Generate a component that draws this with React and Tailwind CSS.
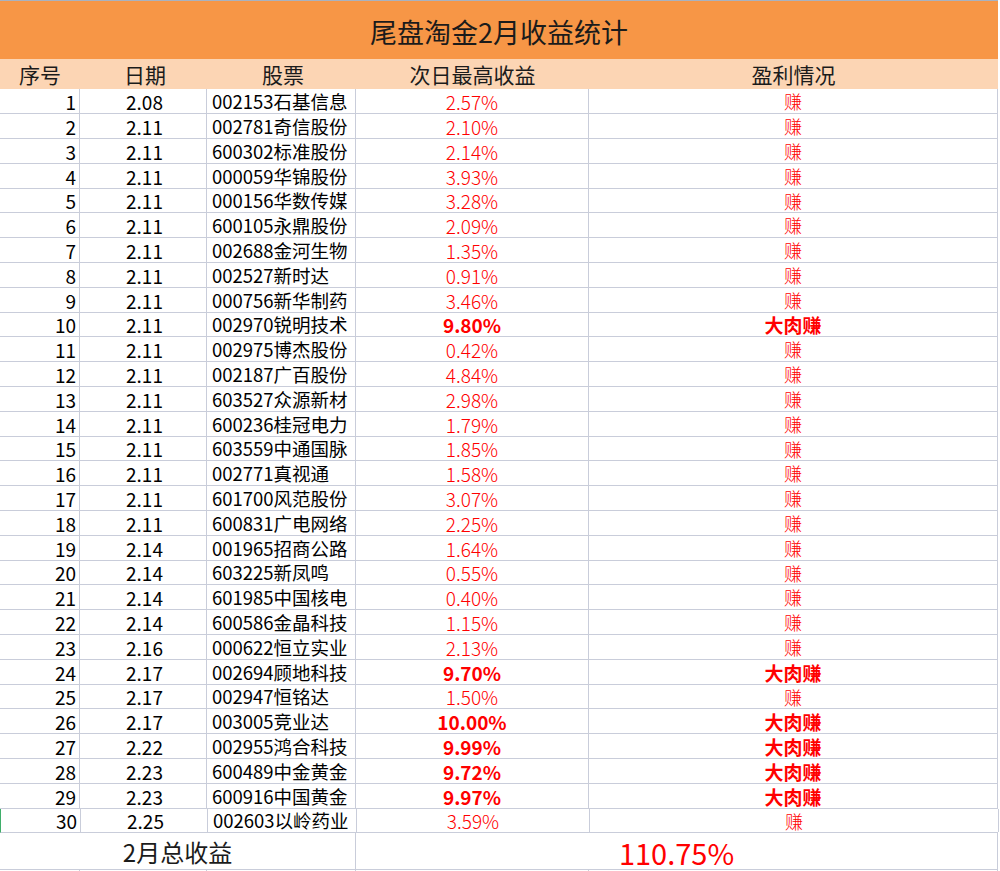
import React from "react";

const rows = [
  ["1", "2.08", "002153石基信息", "2.57%", false],
  ["2", "2.11", "002781奇信股份", "2.10%", false],
  ["3", "2.11", "600302标准股份", "2.14%", false],
  ["4", "2.11", "000059华锦股份", "3.93%", false],
  ["5", "2.11", "000156华数传媒", "3.28%", false],
  ["6", "2.11", "600105永鼎股份", "2.09%", false],
  ["7", "2.11", "002688金河生物", "1.35%", false],
  ["8", "2.11", "002527新时达", "0.91%", false],
  ["9", "2.11", "000756新华制药", "3.46%", false],
  ["10", "2.11", "002970锐明技术", "9.80%", true],
  ["11", "2.11", "002975博杰股份", "0.42%", false],
  ["12", "2.11", "002187广百股份", "4.84%", false],
  ["13", "2.11", "603527众源新材", "2.98%", false],
  ["14", "2.11", "600236桂冠电力", "1.79%", false],
  ["15", "2.11", "603559中通国脉", "1.85%", false],
  ["16", "2.11", "002771真视通", "1.58%", false],
  ["17", "2.11", "601700风范股份", "3.07%", false],
  ["18", "2.11", "600831广电网络", "2.25%", false],
  ["19", "2.14", "001965招商公路", "1.64%", false],
  ["20", "2.14", "603225新凤鸣", "0.55%", false],
  ["21", "2.14", "601985中国核电", "0.40%", false],
  ["22", "2.14", "600586金晶科技", "1.15%", false],
  ["23", "2.16", "000622恒立实业", "2.13%", false],
  ["24", "2.17", "002694顾地科技", "9.70%", true],
  ["25", "2.17", "002947恒铭达", "1.50%", false],
  ["26", "2.17", "003005竞业达", "10.00%", true],
  ["27", "2.22", "002955鸿合科技", "9.99%", true],
  ["28", "2.23", "600489中金黄金", "9.72%", true],
  ["29", "2.23", "600916中国黄金", "9.97%", true],
  ["30", "2.25", "002603以岭药业", "3.59%", false],
];

const font = { fontFamily: '"Noto Sans CJK SC", "Liberation Sans", sans-serif' };

export default function App() {
  return (
    <div className="w-[1000px] h-[871px] bg-white overflow-hidden text-black" style={font}>
      <div className="w-[998px] border-t border-[#a9b2c0]">
        <div className="h-[58px] bg-[#f79646] flex items-center justify-center text-[27px] leading-none text-[#1b1b1b] pt-[2px]">
          尾盘淘金2月收益统计
        </div>
        <div className="h-[30px] bg-[#fcd5b4] grid grid-cols-[80px_127px_149px_233px_409px] items-center text-[21px] leading-none text-[#1b1b1b]">
          <div className="text-center">序号</div>
          <div className="text-center pl-[3px]">日期</div>
          <div className="text-center pl-[3px]">股票</div>
          <div className="text-center">次日最高收益</div>
          <div className="text-center">盈利情况</div>
        </div>
        {rows.map((r, i) => {
          const h = i % 5 === 4 ? "h-[24px]" : "h-[25px]";
          return (
            <div
              key={i}
              className={`${h} grid grid-cols-[80px_127px_149px_233px_409px] border-b border-[#c9cdda] text-[19px] leading-none ${
                i === 29 ? "border-l border-l-[#3fae6a]" : ""
              }`}
            >
              <div className="border-r border-[#c9cdda] flex items-center justify-end pr-[3px]">{r[0]}</div>
              <div className="border-r border-[#c9cdda] flex items-center justify-center pl-[3px]">{r[1]}</div>
              <div className="border-r border-[#c9cdda] flex items-center pl-[5px] whitespace-nowrap text-[18.5px]">{r[2]}</div>
              <div
                className={`border-r border-[#c9cdda] flex items-center justify-center text-[#ff0000] ${
                  r[4] ? "font-bold" : "font-light"
                }`}
              >
                {r[3]}
              </div>
              <div
                className={`border-r border-[#c9cdda] flex items-center justify-center text-[#ff0000] ${
                  r[4] ? "font-bold text-[19px]" : "font-light text-[18px]"
                }`}
              >
                {r[4] ? "大肉赚" : "赚"}
              </div>
            </div>
          );
        })}
        <div className="h-[37px] grid grid-cols-[356px_642px] border-b border-[#c9cdda]">
          <div className="border-r border-[#c9cdda] flex items-center justify-center text-[24px] leading-none text-[#1b1b1b] pt-[2px]">
            2月总收益
          </div>
          <div className="border-r border-[#c9cdda] flex items-center justify-center text-[29px] leading-none text-[#ff0000] pt-[2px]">
            110.75%
          </div>
        </div>
        <div className="h-[4px] grid grid-cols-[80px_127px_149px_233px_409px]">
          <div className="border-r border-[#c9cdda]"></div>
          <div className="border-r border-[#c9cdda]"></div>
          <div className="border-r border-[#c9cdda]"></div>
          <div className="border-r border-[#c9cdda]"></div>
          <div className="border-r border-[#c9cdda]"></div>
        </div>
      </div>
    </div>
  );
}
